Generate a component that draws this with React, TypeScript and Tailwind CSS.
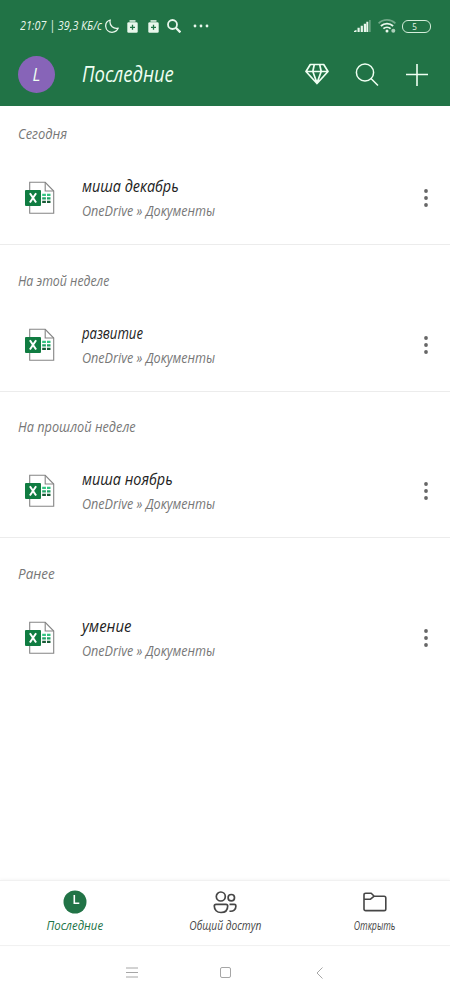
import clsx from 'clsx'
import { ReactNode } from 'react'

interface FileSection {
  label: string
  name: string
  // horizontal squeeze of the file name and of the label
  nameClass: string
  labelClass: string
}

const sections: FileSection[] = [
  { label: 'Сегодня', name: 'миша декабрь', labelClass: 'scale-x-[0.865]', nameClass: 'scale-x-[0.9]' },
  { label: 'На этой неделе', name: 'развитие', labelClass: 'scale-x-[0.82]', nameClass: 'scale-x-[0.82]' },
  { label: 'На прошлой неделе', name: 'миша ноябрь', labelClass: 'scale-x-[0.85]', nameClass: 'scale-x-[0.9]' },
  { label: 'Ранее', name: 'умение', labelClass: 'scale-x-[0.9]', nameClass: 'scale-x-[0.93]' },
]

const BatteryPlus = () => (
  <svg className="h-[13px] w-[11px]" viewBox="0 0 11 13">
    <path d="M2.5 0.2h6v1.5h-6z" fill="#e9f7ec" />
    <rect x="0.3" y="2.2" width="10.4" height="10.6" rx="1.3" fill="#e9f7ec" />
    <path d="M5.5 4.8v5M3 7.3h5" stroke="#217346" strokeWidth="1.3" />
  </svg>
)

const StatusBar = () => (
  <div className="flex h-[52px] items-center pl-5 pr-[19px] text-[#e9f7ec]">
    <div className="w-[84px] whitespace-nowrap text-[12.5px]">
      <span className="inline-block origin-left scale-x-[0.86]">21:07 | 39,3 КБ/с</span>
    </div>
    <svg className="ml-px h-[14px] w-[14px]" viewBox="0 0 14 14" fill="none" stroke="currentColor" strokeWidth="1.3">
      <path d="M5.2 1C1.9 2 .5 4.6.7 7.3c.3 3.5 3 6 6.3 6 2.900 0 5.200-1.600 6.200-4.200C9.100 10.300 3.800 7.300 5.200 1Z" strokeLinejoin="round" />
    </svg>
    <div className="ml-2 flex gap-[10px]">
      <BatteryPlus />
      <BatteryPlus />
    </div>
    <svg className="ml-2 h-[14px] w-[14px]" viewBox="0 0 14 14" fill="none" stroke="currentColor" strokeWidth="1.8">
      <circle cx="5.500" cy="5.500" r="4.500" />
      <path d="m8.800 8.800 4.600 4.600" strokeWidth="2.300" />
    </svg>
    <svg className="ml-3 h-1 w-4" viewBox="0 0 16 4" fill="currentColor">
      <circle cx="2" cy="2" r="1.400" />
      <circle cx="8" cy="2" r="1.400" />
      <circle cx="14" cy="2" r="1.400" />
    </svg>

    <svg className="ml-auto h-3 w-[17px]" viewBox="0 0 17 12" fill="currentColor">
      <path d="M0 12h2.500V9.800L0 11zM3.500 12h2.200V7.800H3.500zM6.700 12h2.200V5.800H6.700zM9.800 12H12V3.800H9.800zM12.300 12h2V1.800h-2z" />
      <path d="M15 12h1.700V0H15z" opacity="0.35" />
    </svg>
    <svg className="ml-[7px] h-[14px] w-[18px]" viewBox="0 0 18 14" fill="none" stroke="currentColor" strokeWidth="1.800">
      <path d="M.600 4.300C5.300-.200 12.700-.200 17.400 4.300" opacity="0.4" />
      <path d="M2.900 7c3.400-3.300 8.800-3.300 12.200 0M5.400 9.700c2-1.900 5.200-1.900 7.200 0" />
      <circle cx="9" cy="12" r="1.500" fill="currentColor" stroke="none" />
      <circle cx="15.300" cy="11.800" r="2" fill="currentColor" stroke="none" opacity="0.7" />
    </svg>
    <div className="ml-[6px] flex h-[13px] w-[29px] items-center justify-center rounded-[6px] border-[1.5px] border-[#d5eedb] text-[9px] not-italic leading-none">
      <span className="-ml-[3px] scale-x-90">5</span>
    </div>
  </div>
)

const Header = () => (
  <header className="h-[106px] bg-[#217346]">
    <StatusBar />
    <div className="flex h-[45px] items-center pl-[18px] pr-[22px] text-[#effff2]">
      <div className="flex h-[37px] w-[37px] items-center justify-center rounded-full bg-[#8764b8] text-[18px]">
        <span className="scale-x-90">L</span>
      </div>
      <h1 className="ml-[27px] origin-left scale-x-[0.88] text-[21px]">Последние</h1>
      <svg className="ml-auto h-[23px] w-[24px]" viewBox="0 0 24 23" fill="none" stroke="currentColor" strokeWidth="1.700" strokeLinejoin="round">
        <path d="M5.300 1.500h13.400L23 8.500 12 20.500 1 8.500zM1 8.500h22M9.300 1.500 7.800 8.500 12 20l4.200-11.500-1.500-7" />
      </svg>
      <svg className="ml-[26px] h-6 w-6" viewBox="0 0 24 24" fill="none" stroke="currentColor" strokeWidth="1.500">
        <circle cx="10" cy="9.500" r="8.600" />
        <path d="m16 15.500 7 7" />
      </svg>
      <svg className="ml-[27px] h-[22px] w-[22px]" viewBox="0 0 22 22" stroke="currentColor" strokeWidth="1.600">
        <path d="M11 0v22M0 10.500h22" />
      </svg>
    </div>
  </header>
)

const ExcelIcon = () => (
  <svg className="h-[34px] w-[30px]" viewBox="0 0 30 34" fill="none">
    <path d="M4.700 1.300h15.500l8.500 8.700v22.200h-24z" fill="#fff" stroke="#858585" strokeWidth="1.100" />
    <path d="M20.200 1.300V10h8.500" stroke="#858585" strokeWidth="1.100" />
    <path d="M17.200 12.800h3.700v2.100h-3.700zM22 12.800h3.500v2.100H22z" fill="#33c481" />
    <path d="M17.200 16.300h3.700v2.100h-3.700zM22 16.300h3.500v2.100H22z" fill="#21a366" />
    <path d="M17.200 19.800h3.700v2.100h-3.700zM22 19.800h3.500v2.100H22z" fill="#185c37" />
    <rect x="0" y="9" width="16" height="16" rx="1" fill="#107c41" />
    <path d="m4.900 12.300 6.200 9.200M11.100 12.300l-6.200 9.200" stroke="#fff" strokeWidth="2" />
  </svg>
)

const FileRow = ({ name, nameClass }: { name: string; nameClass: string }) => (
  <div className="flex h-[92px] items-center pl-[25px] pr-[22px]">
    <ExcelIcon />
    <div className="ml-[27px] flex flex-col items-start whitespace-nowrap leading-6">
      <span className={clsx('origin-left text-[16px] text-[#222222]', nameClass)}>{name}</span>
      <span className="origin-left scale-x-[0.84] text-[15px] text-[#777777]">OneDrive » Документы</span>
    </div>
    <svg className="ml-auto h-[18px] w-1" viewBox="0 0 4 18" fill="#666">
      <circle cx="2" cy="2" r="1.900" />
      <circle cx="2" cy="9" r="1.900" />
      <circle cx="2" cy="16" r="1.900" />
    </svg>
  </div>
)

interface TabProps {
  label: string
  labelClass: string
  active?: boolean
  children: ReactNode
}

const Tab = ({ label, labelClass, active, children }: TabProps) => (
  <button className={clsx('flex flex-1 flex-col items-center pt-[9px]', active ? 'text-[#217346]' : 'text-[#464646]')}>
    {children}
    <span className={clsx('mt-[2px] whitespace-nowrap text-[12px] leading-5', labelClass)}>{label}</span>
  </button>
)

export default function App() {
  return (
    <div className="flex h-[1000px] w-[450px] flex-col overflow-hidden bg-white font-['Open_Sans','Noto_Sans',sans-serif] italic">
      <Header />
      <main className="flex-1">
        {sections.map((section, i) => (
          <section key={section.label} className={clsx(i < sections.length - 1 && 'border-b border-[#ececec]')}>
            <div className={clsx('flex items-end pb-[9px] pl-[18px]', i === 0 ? 'h-[46px]' : 'h-[53.700px]')}>
              <h2 className={clsx('origin-left whitespace-nowrap text-[15px] leading-5 text-[#777777]', section.labelClass)}>
                {section.label}
              </h2>
            </div>
            <FileRow name={section.name} nameClass={section.nameClass} />
          </section>
        ))}
      </main>

      <nav className="flex h-[66px] border-y border-[#f1f1f1] shadow-[0_-1px_3px_rgba(0,0,0,0.04)]">
        <Tab label="Последние" labelClass="scale-x-[0.95]" active>
          <svg className="h-6 w-6" viewBox="0 0 24 24" fill="none">
            <circle cx="12" cy="12" r="11.500" fill="#217346" />
            <path d="M11.300 5v8.200h5" stroke="#fff" strokeWidth="1.600" />
          </svg>
        </Tab>
        <Tab label="Общий доступ" labelClass="scale-x-[0.85]">
          <svg className="h-6 w-6" viewBox="0 0 24 24" fill="none" stroke="currentColor" strokeWidth="1.700">
            <circle cx="7.800" cy="6.500" r="4.500" />
            <circle cx="18.300" cy="7.700" r="3.200" />
            <path d="M3 14.300h10c1 0 1.700.700 1.700 1.700 0 4-2.600 6.500-6.700 6.500S1.300 20 1.300 16c0-1 .700-1.700 1.700-1.700ZM16.500 14.300h4.800c1 0 1.600.700 1.600 1.600 0 3.600-2.400 5.800-6.400 5.300" />
          </svg>
        </Tab>
        <Tab label="Открыть" labelClass="scale-x-[0.73]">
          <svg className="h-6 w-6" viewBox="0 0 24 24" fill="none" stroke="currentColor" strokeWidth="1.600" strokeLinejoin="round">
            <path d="M1 5c0-1.200.600-1.800 1.700-1.800h5.500l3 3h9.900c1.100 0 1.700.600 1.700 1.700v11c0 1.100-.600 1.700-1.700 1.700H2.700C1.600 20.600 1 20 1 18.900zM1 9.200h6.500l3.700-3" />
          </svg>
        </Tab>
      </nav>

      <div className="flex h-[54px] items-center justify-center pb-px pr-[2px] text-[#a6a6a6]">
        <svg className="h-[11px] w-3" viewBox="0 0 12 11" stroke="currentColor" strokeWidth="1">
          <path d="M0 1h12M0 5.500h12M0 10h12" />
        </svg>
        <div className="ml-[82px] h-[11px] w-[11px] rounded-[2px] border border-current" />
        <svg className="ml-[85px] h-3 w-[7px]" viewBox="0 0 7 12" fill="none" stroke="currentColor" strokeWidth="1">
          <path d="M6.500.500 1 6l5.500 5.500" />
        </svg>
      </div>
    </div>
  )
}
